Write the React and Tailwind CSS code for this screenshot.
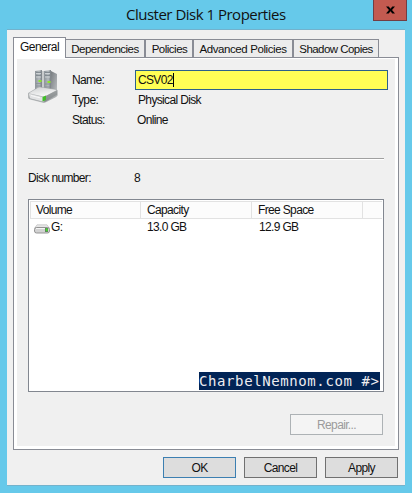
import React, { useState } from 'react';

const TABS = [
	{ label: 'Dependencies', className: 'w-[79px] tracking-[-0.5px]' },
	{ label: 'Policies', className: 'w-[48px] border-l pl-px tracking-[-0.5px]' },
	{ label: 'Advanced Policies', className: 'w-[100px] border-l tracking-[-0.4px]' },
	{ label: 'Shadow Copies', className: 'w-[86px] border-l tracking-[-0.55px]' },
];

const VOLUMES = [
	{ name: 'G:', capacity: '13.0 GB', free: '12.9 GB' },
];

const ServerDiskIcon = () => (
	<svg width="31" height="33" viewBox="0 0 31 33" className="block">
		<defs>
			<linearGradient id="tower" x1="0" x2="1">
				<stop offset="0" stopColor="#8d9499" />
				<stop offset="0.6" stopColor="#b5bbbe" />
				<stop offset="1" stopColor="#777d82" />
			</linearGradient>
			<linearGradient id="towerSide" x1="0" x2="1" y2="1">
				<stop offset="0" stopColor="#777c80" />
				<stop offset="1" stopColor="#c0c3c5" />
			</linearGradient>
			<linearGradient id="lid" x1="0" x2="0.4" y2="1">
				<stop offset="0" stopColor="#d0d2d3" />
				<stop offset="1" stopColor="#f8f8f8" />
			</linearGradient>
			<linearGradient id="front" x1="0" x2="0" y2="1">
				<stop offset="0" stopColor="#d7d8d9" />
				<stop offset="1" stopColor="#929698" />
			</linearGradient>
		</defs>
		<path d="M13 1h3v19h-3z" fill="#c9cccd" />
		<path d="M7 1l7-1v21H7z" fill="url(#tower)" />
		<path d="M16 1l7-1v22h-7z" fill="url(#tower)" />
		<path d="M23 1l6 3v18l-6 3z" fill="url(#towerSide)" />
		<path d="M8 2.500h5M8 5.500h5M17 2.500h5M17 5.500h5" stroke="#7b848a" strokeWidth=".8" />
		<path d="M8 3.500h5M8 7h5M17 3.500h5M17 7h5" stroke="#d5dadd" strokeWidth="0.8" />
		<path d="M8 13.500h5M8 16h5M17 14h5M17 17h5" stroke="#858e93" strokeWidth="0.8" />
		<path d="M10.500 10h3v2h-3zM19.500 11h3v2h-3z" fill="#8ce52c" />
		<path d="M0 23.500L10 17.500q1-.5 2-.3L28 19.500q1.500.3 1.300 1.300v4q0 1-1 1.700L18 31.800q-1.500.8-3 .5L2 29q-1.500-.3-1.500-1.300z" fill="url(#front)" stroke="#a0a4a6" strokeWidth="0.6" />
		<path d="M1 23.200L10.500 17.800l1.500-.2L28.500 20 16.500 26.800z" fill="url(#lid)" />
		<path d="M1 23.800L15.500 27.200v4.500L2 28.200z" fill="#e2e3e4" />
		<path d="M3 25.500L12 27.800" stroke="#f9f9f9" />
		<path d="M15.500 26.900L29 20.300v4.500L17 31.700z" fill="#777b7e" fillOpacity=".55" />
		<path d="M14.500 27l3.500-1.400v4.300l-3.500 1.600z" fill="#40bd28" />
	</svg>
);

const DriveIcon = () => (
	<svg width="16" height="10" viewBox="0 0 16 10" className="block">
		<path d="M3 .8h10l2.300 3.200H.7z" fill="#e6e6e6" stroke="#c2c2c2" strokeWidth=".7" />
		<rect x=".5" y="3.500" width="15" height="5.500" rx="2" fill="#d2d2d2" stroke="#8b8b8b" strokeWidth=".9" />
		<path d="M2 4.500h9" stroke="#f5f5f5" />
		<rect x="11" y="4" width="3" height="4" fill="#5b8a59" />
		<rect x="12" y="4.500" width="1.500" height="2.500" fill="#45df28" />
	</svg>
);

const DialogButton = ({ children, primary, disabled }) => {
	let tone = 'w-[73px] border-[#707070] bg-[#dddddd]';
	if (primary) tone = 'w-[73px] border-[#3c7fb1] bg-[#dddddd]';
	if (disabled) tone = 'w-[93px] border-[#adb2b5] bg-[#f4f4f4] text-[#9b9b9b]';
	return (
		<button type="button" disabled={disabled} className={`flex h-[21px] items-center justify-center border ${tone}`}>
			{children}
		</button>
	);
};

const App = () => {
	const [name, setName] = useState('CSV02');

	return (
		<div className="flex h-[493px] w-[412px] flex-col overflow-hidden bg-[#66c9ea] font-['Liberation_Sans',sans-serif] text-[12px] leading-[14px] tracking-[-0.65px] text-[#111]">
			<header className="flex h-[29px] shrink-0 items-start">
				<h1 className="w-[373px] pl-[126px] pt-1 font-['Open_Sans',sans-serif] text-[15px] leading-[21px] tracking-[-0.5px] whitespace-nowrap">
					Cluster Disk 1 Properties
				</h1>
				<button type="button" aria-label="Close" className="flex h-[21px] w-[34px] items-center justify-center border border-t-0 border-[#733d43] bg-[#c35a50]">
					<svg width="9" height="8" viewBox="0 0 10 8">
						<path d="M0 0h3l2 2.500L7 0h3L6.700 4 10 8H7L5 5.500 3 8H0l3.300-4z" fill="#000" />
					</svg>
				</button>
			</header>

			<main className="ml-[7px] flex h-[457px] w-[398px] shrink-0 flex-col border-y border-[#73b2cc] bg-[#f0f0f0] pl-[6px]">
				<nav className="flex h-[27px] items-end">
					<button type="button" className="relative z-10 -mb-px flex h-[21px] w-[53px] items-start justify-center border border-b-0 border-[#898c95] bg-white pt-[2px] tracking-[-0.5px]">
						General
					</button>
					{TABS.map((tab) => (
						<button
							key={tab.label}
							type="button"
							className={`flex h-[18px] shrink-0 items-center justify-center border-t border-r border-[#898c95] bg-[#ececec] text-[11.5px] whitespace-nowrap ${tab.className}`}
						>
							{tab.label}
						</button>
					))}
				</nav>

				<section className="h-[393px] w-[386px] border border-[#898c95] bg-white px-[3px] pt-px pb-[3px]">
					<div className="h-full bg-[#f0f0f0] pl-[11px]">
						<div className="flex h-[99px] pt-[11px]">
							<div className="w-[44px]">
								<ServerDiskIcon />
							</div>
							<dl className="grid grid-cols-[63px_253px] grid-rows-[20px_20px_20px] items-center">
								<dt>Name:</dt>
								<dd className="flex h-[20px] items-center border border-[#2c628b] bg-[#ffff55] pl-[2px]">
									<span
										contentEditable
										suppressContentEditableWarning
										className="border-r border-black outline-none"
										onBlur={(event) => setName(event.currentTarget.textContent)}
									>
										{name}
									</span>
								</dd>
								<dt>Type:</dt>
								<dd className="pl-[3px]">Physical Disk</dd>
								<dt>Status:</dt>
								<dd className="pl-[2px]">Online</dd>
							</dl>
						</div>

						<div className="h-[2px] w-[356px] border-t border-b border-t-[#a0a0a0] border-b-white" />

						<div className="flex h-[39px] pt-[11px]">
							<span className="w-[106px]">Disk number:</span>
							<span>8</span>
						</div>

						<div className="flex h-[193px] w-[356px] flex-col border border-[#828790] bg-white p-px">
							<div className="grid h-[18px] grid-cols-[111px_111px_111px_1fr] border-t border-b border-[#e2e2e2] bg-[#fcfcfc] leading-[17px]">
								<span className="border-x border-[#e2e2e2] pl-[5px]">Volume</span>
								<span className="border-r border-[#e2e2e2] pl-[6px]">Capacity</span>
								<span className="border-r border-[#e2e2e2] pl-[6px]">Free Space</span>
							</div>
							{VOLUMES.map((volume) => (
								<div key={volume.name} className="grid h-[15px] grid-cols-[111px_111px_111px] items-center">
									<span className="flex items-center pl-[4px]">
										<span className="pt-[5px]"><DriveIcon /></span>
										<span className="pl-px">{volume.name}</span>
									</span>
									<span className="pl-[6px]">{volume.capacity}</span>
									<span className="pl-[7px]">{volume.free}</span>
								</div>
							))}
							<div className="mt-auto mr-[2px] h-[18px] w-[181px] self-end overflow-hidden bg-[#012456] font-['DejaVu_Sans_Mono',monospace] text-[14px] leading-[19px] tracking-[0.6px] whitespace-nowrap text-[#eeedf0]">
								CharbelNemnom.com #&gt;
							</div>
						</div>

						<div className="flex w-[355px] justify-end pt-[22px]">
							<DialogButton disabled>Repair...</DialogButton>
						</div>
					</div>
				</section>

				<footer className="flex w-[385px] justify-end gap-2 pt-[7px]">
					<DialogButton primary>OK</DialogButton>
					<DialogButton>Cancel</DialogButton>
					<DialogButton>Apply</DialogButton>
				</footer>
			</main>
		</div>
	);
};

export default App;
